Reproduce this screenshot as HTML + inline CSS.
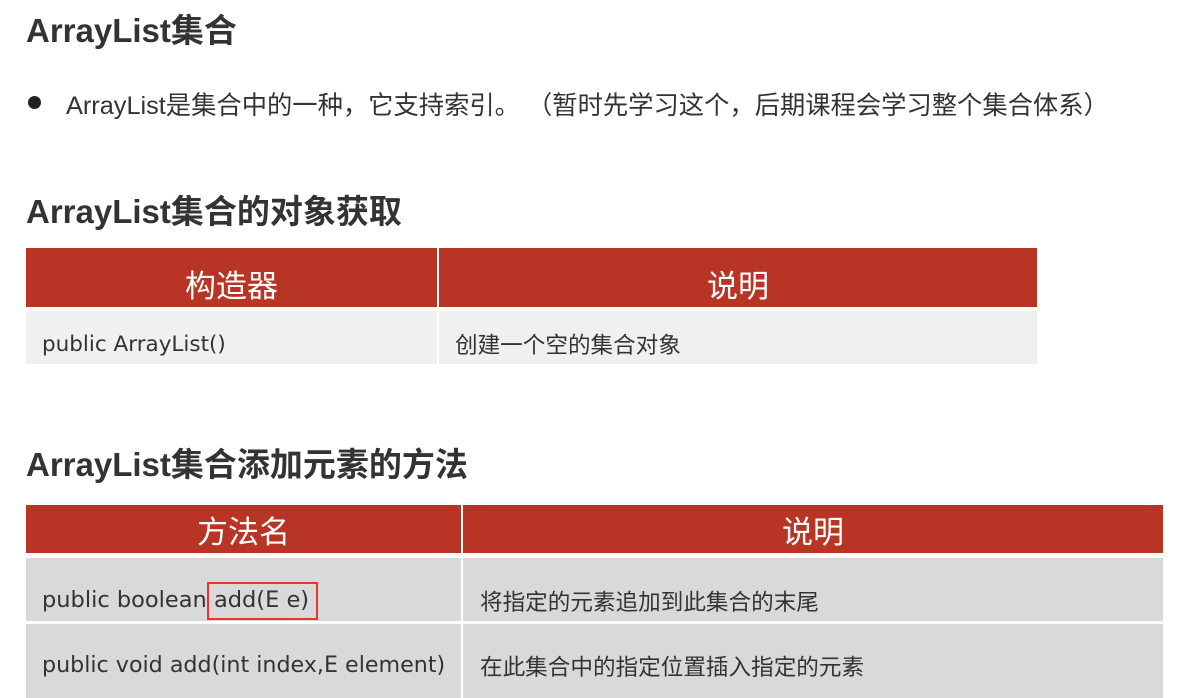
<!DOCTYPE html>
<html><head><meta charset="utf-8"><style>
body{margin:0;width:1179px;height:698px;background:#fff;position:relative;overflow:hidden;font-family:"Liberation Sans","Noto Sans CJK SC",sans-serif;color:#222}
.a{position:absolute;white-space:nowrap}
h{position:absolute;font-weight:bold;font-size:33px;color:#333;white-space:nowrap}
.hd{position:absolute;background:#b83525;color:#fff;font-size:31px;text-align:center}
.c{position:absolute;font-size:21px;color:#333;white-space:nowrap}
.l{font-family:"DejaVu Sans","Noto Sans CJK SC",sans-serif;font-size:21.5px}
.z{font-size:22.6px}
</style></head><body>
<h style="left:26px;top:4px">ArrayList集合</h>
<div class="a" style="left:28px;top:96px;width:13px;height:13px;border-radius:50%;background:#222"></div>
<div class="a" style="left:66px;top:86px;font-size:25.3px;color:#333">ArrayList是集合中的一种，它支持索引。 （暂时先学习这个，后期课程会学习整个集合体系）</div>
<h style="left:26px;top:185px">ArrayList集合的对象获取</h>
<div class="hd" style="left:26px;top:248px;width:411px;height:59px;line-height:78px">构造器</div>
<div class="hd" style="left:439px;top:248px;width:598px;height:59px;line-height:78px">说明</div>
<div class="a" style="left:26px;top:311px;width:411px;height:53px;background:#f0f0f0"></div>
<div class="a" style="left:439px;top:311px;width:598px;height:53px;background:#f0f0f0"></div>
<div class="c l" style="left:42px;top:332px">public ArrayList()</div>
<div class="c z" style="left:455px;top:327px">创建一个空的集合对象</div>
<h style="left:26px;top:438px">ArrayList集合添加元素的方法</h>
<div class="hd" style="left:26px;top:505px;width:435px;height:48px;line-height:56px">方法名</div>
<div class="hd" style="left:463px;top:505px;width:700px;height:48px;line-height:56px">说明</div>
<div class="a" style="left:26px;top:558px;width:435px;height:63px;background:#d9d9d9"></div>
<div class="a" style="left:463px;top:558px;width:700px;height:63px;background:#d9d9d9"></div>
<div class="a" style="left:26px;top:624px;width:435px;height:74px;background:#d9d9d9"></div>
<div class="a" style="left:463px;top:624px;width:700px;height:74px;background:#d9d9d9"></div>
<div class="c l" style="left:42px;top:587px;font-size:22.5px">public boolean add(E e)</div>
<div class="a" style="left:207px;top:582px;width:107px;height:34px;border:2px solid #f03030"></div>
<div class="c z" style="left:480px;top:584px">将指定的元素追加到此集合的末尾</div>
<div class="c l" style="left:42px;top:652px;font-size:22.2px">public void add(int index,E element)</div>
<div class="c z" style="left:480px;top:649px">在此集合中的指定位置插入指定的元素</div>
</body></html>
